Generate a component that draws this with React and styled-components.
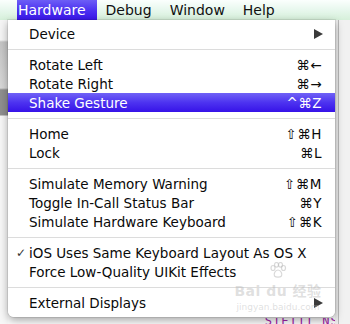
import React from "react";
import styled, { createGlobalStyle } from "styled-components";

const Global = createGlobalStyle`
  html, body { margin: 0; padding: 0; }
  body {
    width: 350px;
    height: 324px;
    overflow: hidden;
    background: #f3f3f3;
    font-family: "DejaVu Sans", "Noto Sans", sans-serif;
  }
`;

const Screen = styled.div`
  position: relative;
  width: 350px;
  height: 324px;
  overflow: hidden;
  display: flex;
  flex-direction: column;
`;

const MenuBar = styled.div`
  height: 20px;
  flex: none;
  display: flex;
  align-items: stretch;
  padding-left: 17px;
  background: linear-gradient(to bottom, #fbfffd 0%, #e9f8ef 45%, #d6f0da 100%);
  box-sizing: border-box;
`;

const BarItem = styled.div`
  display: flex;
  align-items: center;
  padding: 0 ${(p) => (p.$first ? "11px" : "9px")} 0 ${(p) => (p.$first ? "1px" : "9px")};
  font-size: 14px;
  color: ${(p) => (p.$active ? "#ffffff" : "#111")};
  background: ${(p) =>
    p.$active ? "linear-gradient(to bottom, #6d5ef6 0%, #4a2ff0 55%, #3a16ea 100%)" : "transparent"};
`;

const Backdrop = styled.div`
  flex: 1;
  display: grid;
  grid-template-columns: 8px 1fr 15px;
`;

const LeftStrip = styled.div`
  background: linear-gradient(
    to bottom,
    #f5f5f5 0px,
    #f5f5f5 20px,
    #c4c4c4 22px,
    #d8d8d8 68px,
    #8f8f8f 70px,
    #8f8f8f 95px,
    #f7f7f7 96px
  );
`;

const Center = styled.div`
  background: #fafafa;
  display: flex;
  align-items: flex-end;
  justify-content: flex-end;
  overflow: hidden;
  padding-bottom: 0;
`;

const BackText = styled.div`
  font-family: "DejaVu Sans Mono", monospace;
  font-size: 12px;
  line-height: 7px;
  height: 6px;
  overflow: hidden;
  color: #a020a8;
  margin-right: -12px;
  letter-spacing: 1px;
  white-space: nowrap;
`;

const RightStrip = styled.div`
  background: linear-gradient(to right, #ececec 0 3px, #b8b8b8 3px 4px, #f1f1f1 4px);
`;

const Menu = styled.div`
  position: absolute;
  left: 8px;
  top: 20px;
  width: 327px;
  box-sizing: border-box;
  padding: 4px 0 5px;
  background: rgba(255, 255, 255, 0.98);
  border-radius: 0 0 6px 6px;
  box-shadow: 0 3px 8px rgba(0, 0, 0, 0.35), 0 0 0 1px rgba(0, 0, 0, 0.08);
`;

const Row = styled.div`
  height: 19px;
  display: grid;
  grid-template-columns: 21px 1fr auto;
  align-items: center;
  padding-right: 13px;
  font-size: 13.5px;
  color: ${(p) => (p.$active ? "#ffffff" : "#0a0a0a")};
  background: ${(p) =>
    p.$active ? "linear-gradient(to bottom, #7062f6 0%, #4d33f0 50%, #3612e8 100%)" : "transparent"};
  white-space: nowrap;
`;

const Check = styled.span`
  font-size: 12px;
  color: #333;
  padding-left: 8px;
`;

const Label = styled.span``;

const Shortcut = styled.span`
  text-align: right;
  letter-spacing: 0.5px;
`;

const Separator = styled.div`
  height: 12px;
  display: flex;
  align-items: center;
  &::after {
    content: "";
    flex: 1;
    height: 1px;
    margin-top: 1px;
    background: #dcdcdc;
  }
`;

const Arrow = styled.svg`
  width: 9px;
  height: 10px;
  display: block;
  margin-right: -1px;
`;

const Watermark = styled.div`
  position: absolute;
  left: 228px;
  top: 262px;
  width: 100px;
  color: rgba(185, 185, 185, 0.45);
  font-family: "DejaVu Sans", "Noto Sans CJK SC", sans-serif;
  display: flex;
  flex-direction: column;
  align-items: center;
  white-space: nowrap;
  pointer-events: none;
`;

const Paw = styled.svg`
  width: 18px;
  height: 16px;
  display: block;
`;

const WmBig = styled.div`
  font-size: 14px;
  font-weight: bold;
  letter-spacing: 0.5px;
  margin-top: 2px;
`;

const WmSmall = styled.div`
  font-size: 9px;
  margin-top: 2px;
`;

const SubArrow = () => (
  <Arrow viewBox="0 0 9 10">
    <path d="M0 0 L9 5 L0 10 Z" fill="#3a3a3a" />
  </Arrow>
);

const items = [
  { label: "Device", sub: true },
  { sep: true },
  { label: "Rotate Left", key: "⌘←" },
  { label: "Rotate Right", key: "⌘→" },
  { label: "Shake Gesture", key: "^⌘Z", active: true },
  { sep: true },
  { label: "Home", key: "⇧⌘H" },
  { label: "Lock", key: "⌘L" },
  { sep: true },
  { label: "Simulate Memory Warning", key: "⇧⌘M" },
  { label: "Toggle In-Call Status Bar", key: "⌘Y" },
  { label: "Simulate Hardware Keyboard", key: "⇧⌘K" },
  { sep: true },
  { label: "iOS Uses Same Keyboard Layout As OS X", checked: true },
  { label: "Force Low-Quality UIKit Effects" },
  { sep: true },
  { label: "External Displays", sub: true },
];

export default function App() {
  return (
    <>
      <Global />
      <Screen>
        <MenuBar>
          <BarItem $first $active>Hardware</BarItem>
          <BarItem>Debug</BarItem>
          <BarItem>Window</BarItem>
          <BarItem>Help</BarItem>
        </MenuBar>
        <Backdrop>
          <LeftStrip />
          <Center>
            <BackText>STEIII NSM</BackText>
          </Center>
          <RightStrip />
        </Backdrop>
        <Menu>
          {items.map((it, i) =>
            it.sep ? (
              <Separator key={i} />
            ) : (
              <Row key={i} $active={it.active}>
                <Check>{it.checked ? "✓" : ""}</Check>
                <Label>{it.label}</Label>
                {it.sub ? <SubArrow /> : <Shortcut>{it.key || ""}</Shortcut>}
              </Row>
            )
          )}
        </Menu>
        <Watermark>
          <Paw viewBox="0 0 18 16">
            <g fill="none" stroke="rgba(180,180,180,0.5)" strokeWidth="1.2">
              <ellipse cx="4" cy="6" rx="2" ry="2.5" />
              <ellipse cx="7.5" cy="2.8" rx="2" ry="2.3" />
              <ellipse cx="11.5" cy="2.8" rx="2" ry="2.3" />
              <ellipse cx="14.5" cy="6" rx="2" ry="2.5" />
              <path d="M9 8 C6 8 4.5 12 5.5 14 C7 15.5 11 15.5 12.5 14 C13.5 12 12 8 9 8 Z" />
            </g>
          </Paw>
          <WmBig>Bai du 经验</WmBig>
          <WmSmall>jingyan.baidu.com</WmSmall>
        </Watermark>
      </Screen>
    </>
  );
}
